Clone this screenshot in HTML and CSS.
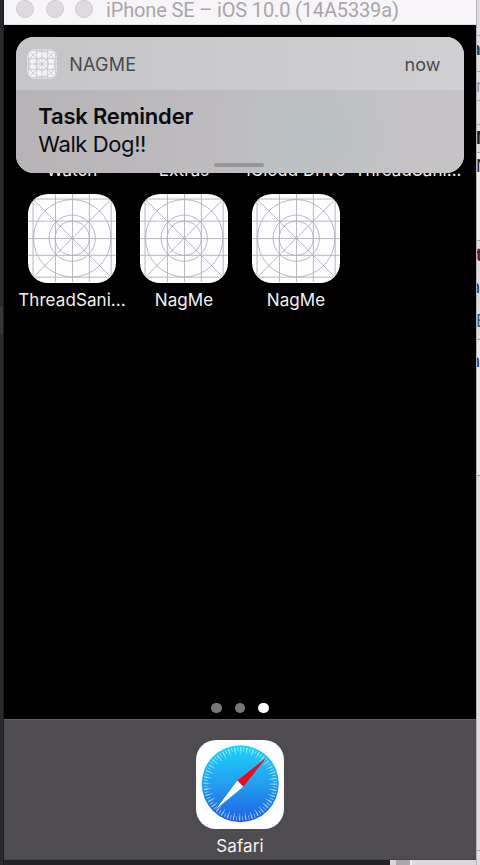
FILE: index.html
```html
<!DOCTYPE html>
<html lang="en">
<head>
<meta charset="utf-8">
<title>iPhone SE – iOS 10.0 (14A5339a)</title>
<link rel="stylesheet" href="styles.css">
</head>
<body>
<svg class="defs" aria-hidden="true">
  <symbol id="grid-icon" viewBox="0 0 88 88">
    <path d="M5 0V88M27.3 0V88M44.3 0V88M61 0V88M82.7 0V88M0 5H88M0 27H88M0 44.3H88M0 61H88M0 82.7H88M4 4L84 84M84 4L4 84"/>
    <circle cx="44" cy="44" r="38.5"/><circle cx="44" cy="44" r="23"/><circle cx="44" cy="44" r="17"/>
  </symbol>
</svg>
<div class="desktop">
  <div class="edge-left"></div>
  <main class="simulator">
    <header class="titlebar">
      <i class="light"></i><i class="light"></i><i class="light"></i>
      <span class="title">iPhone SE – iOS 10.0 (14A5339a)</span>
    </header>
    <section class="screen">
      <div class="covered"><span>Watch</span><span>Extras</span><span>iCloud Drive</span><span>ThreadSani...</span></div>
      <div class="apps">
        <div class="app"><svg class="icon grid"><use href="#grid-icon"/></svg><span>ThreadSani...</span></div>
        <div class="app"><svg class="icon grid"><use href="#grid-icon"/></svg><span>NagMe</span></div>
        <div class="app"><svg class="icon grid"><use href="#grid-icon"/></svg><span>NagMe</span></div>
      </div>
      <div class="pages"><i></i><i></i><i class="current"></i></div>
      <article class="notice">
        <div class="notice-head">
          <svg class="mini" viewBox="0 0 28 28">
            <rect width="28" height="28" rx="7" fill="#f4f3f5"/>
            <path d="M1.5 0V28M9 0V28M14 0V28M19 0V28M26.5 0V28M0 1.5H28M0 9H28M0 14H28M0 19H28M0 26.5H28M1 1L27 27M27 1L1 27" />
            <circle cx="14" cy="14" r="12"/><circle cx="14" cy="14" r="6"/>
          </svg>
          <span class="name">NAGME</span><span class="when">now</span>
        </div>
        <div class="notice-body"><strong>Task Reminder</strong><p>Walk Dog!!</p><i class="grabber"></i></div>
      </article>
    </section>
    <footer class="dock">
      <svg class="icon" viewBox="0 0 88 88">
        <defs><linearGradient id="sky" x1="0" y1="0" x2="0" y2="1"><stop offset="0" stop-color="#1cd4fa"/><stop offset=".5" stop-color="#229fef"/><stop offset="1" stop-color="#1e5fe3"/></linearGradient></defs>
        <circle cx="44" cy="43.5" r="38.3" fill="url(#sky)"/>
        <circle cx="44" cy="43.5" r="34.5" fill="none" stroke="#e2f4ff" stroke-opacity=".65" stroke-width="4" stroke-dasharray=".8 2.21"/>
        <circle cx="44" cy="43.5" r="33" fill="none" stroke="#e2f4ff" stroke-opacity=".6" stroke-width="7" stroke-dasharray=".8 4.96"/>
        <path d="M70 17.5L41.2 40.3L47 46.5Z" fill="#e70d1e"/>
        <path d="M20 68.5L41.2 40.3L47 46.5Z" fill="#fff"/>
      </svg>
      <span>Safari</span>
    </footer>
    <div class="under"><i class="dark"></i><i class="gap"></i><i class="tab"></i><i class="rest"></i></div>
  </main>
  <aside class="edge-right">
    <div class="h36"></div>
    <div class="h36 bold blue">n</div>
    <div class="h29 dim">r</div>
    <div class="h24"></div>
    <div class="h28 bold">M</div>
    <div class="h88">N</div>
    <div class="h100"><b>t</b><span>n</span><span>E</span></div>
    <div class="h136">n</div>
    <div class="h375"></div>
  </aside>
</div>
</body>
</html>
```
FILE: styles.css
```css
* { box-sizing: border-box; }
body { margin: 0; background: #232226; font-family: Inter, "Liberation Sans", sans-serif; }
p { margin: 0; }
.defs { position: absolute; width: 0; height: 0; }
.desktop { display: grid; grid-template-columns: 4px 472px 4px; height: 865px; overflow: hidden; }
.edge-left { background: linear-gradient(#29282c 0 307px, #353439 307px 334px, #29282c 334px); border-right: 1px solid #1b1b1f; }
.simulator { display: flex; flex-direction: column; height: 865px; overflow: hidden; background: #000; }

.titlebar { height: 25px; flex: none; display: flex; background: #f7f5f8; border-bottom: 1px solid #dedce0; }
.light { width: 18px; height: 18px; flex: none; border-radius: 50%; background: #dddbde; border: 1px solid #ceccd0; margin-left: 12px; }
.light + .light { margin-left: 11.5px; }
.title { margin-left: 13px; font: 20px/20px Roboto, sans-serif; letter-spacing: -.15px; color: #a9a6aa; white-space: nowrap; }

.screen { position: relative; height: 694px; flex: none; display: flex; flex-direction: column; }
.covered { display: grid; grid-template-columns: repeat(4, 112px); height: 157px; padding: 134px 0 0 12px; }
.covered span { display: flex; justify-content: center; line-height: 22px; font-size: 17px; color: #f2f2f2; white-space: nowrap; letter-spacing: .05px; }
.apps { display: grid; grid-template-columns: repeat(4, 112px); padding: 12px 0 0 12px; }
.app { display: flex; flex-direction: column; align-items: center; }
.icon { display: block; width: 88.5px; height: 88.5px; border-radius: 20px; background: #fefdff; }
.grid { fill: none; stroke: #b2b0b3; stroke-width: .9; }
.app span, .dock span { font-size: 17px; line-height: 22px; color: #f2f2f2; margin-top: 6px; white-space: nowrap; letter-spacing: .08px; }
.pages { display: flex; justify-content: center; gap: 13px; margin-top: auto; padding-bottom: 6px; }
.pages i { width: 10.5px; height: 10.5px; border-radius: 50%; background: #79777a; }
.pages .current { background: #fff; }

.notice { position: absolute; left: 12.3px; top: 12px; width: 447.4px; height: 136px; border-radius: 18px; overflow: hidden; background: #c1bfc1; }
.notice-head { height: 53px; display: flex; align-items: center; padding: 1px 23px 0 11px; background: linear-gradient(90deg, #c5c4c6, #d0cfd1); color: #4b4a4d; }
.mini { width: 30px; height: 30px; fill: none; stroke: #c9c7ca; stroke-width: .8; }
.name { margin-left: 12px; font-size: 18px; letter-spacing: .2px; }
.when { margin-left: auto; font-size: 18px; letter-spacing: .1px; }
.notice-body { position: relative; height: 83px; padding: 12px 22px; background: radial-gradient(ellipse 90px 85px at 291px 43px, #b9c1c4 0, #bcc1c4aa 50%, #c0c1c300 100%), linear-gradient(90deg, #b6b4b7, #c3c1c3 75%, #c5c3c5); color: #0b0b0c; font-size: 22px; line-height: 28px; }
.notice-body strong { display: block; font-weight: 600; letter-spacing: -.2px; }
.notice-body p { letter-spacing: -.4px; }
.grabber { position: absolute; left: 198px; bottom: 6.5px; width: 50px; height: 4px; border-radius: 2px; background: #979698; }

.dock { height: 141px; flex: none; display: flex; flex-direction: column; align-items: center; padding-top: 20px; background: #4e4c4e; border-top: 1px solid #636163; border-bottom: 1px solid #444347; }
.under { height: 5px; flex: none; display: flex; background: #232226; }
.dark { width: 386px; }
.gap { width: 6px; background: #d8d6d9; }
.tab { width: 14px; background: #aaa8ab; }
.rest { flex: 1; background: #dad8dc; border-left: 2px solid #efedf0; }

.edge-right { display: flex; flex-direction: column; background: #e0dee2; border-left: 1px solid #b4b2b6; font-size: 17px; color: #222; }
.edge-right div { flex: none; overflow: hidden; border-bottom: 1px solid #aaa8ac; line-height: 26px; text-indent: -7px; }
.edge-right .bold { font-weight: 700; }
.edge-right .blue { color: #23415f; }
.edge-right .dim { color: #99979a; text-indent: -1px; }
.edge-right .h36 { height: 36px; }
.edge-right .h29 { height: 29px; line-height: 28px; }
.edge-right .h24 { height: 24px; }
.edge-right .h28 { height: 28px; text-indent: -1px; }
.edge-right .h88 { height: 88px; text-indent: -1px; background: #efedf0; }
.edge-right .h100 { height: 99px; padding-top: 1px; }
.edge-right .h100 b { display: block; line-height: 27px; text-indent: -1px; color: #552028; }
.edge-right .h100 span { display: block; line-height: 37px; }
.edge-right .h100 span:last-child { text-indent: -1px; line-height: 30px; color: #355b7c; }
.edge-right .h136 { height: 136px; line-height: 42px; background: #ebe9ed; }
.edge-right .h375 { height: 375px; }
```
